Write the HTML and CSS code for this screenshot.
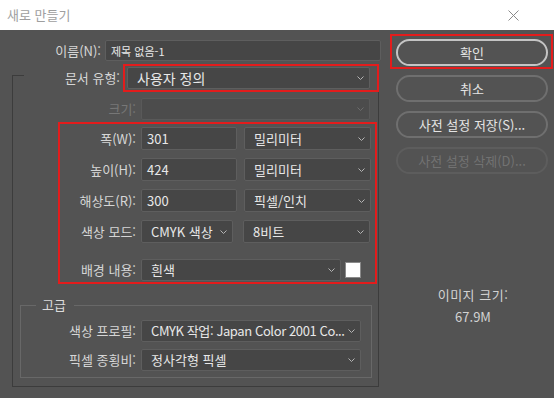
FILE: index.html
```html
<!DOCTYPE html>
<html lang="ko">
<head>
<meta charset="utf-8">
<title>새로 만들기</title>
<link rel="stylesheet" href="styles.css">
</head>
<body>
<div class="titlebar">
  <span class="title">새로 만들기</span>
  <svg class="close" viewBox="0 0 11 11"><path d="M0.5 0.5L10.5 10.5M10.5 0.5L0.5 10.5" stroke="#8a8a8a" stroke-width="1" fill="none"/></svg>
</div>
<div class="main">
  <div class="left">
    <div class="row name-row">
      <span class="lbl w-name">이름(N):</span>
      <div class="field input name-input">제목 없음-1</div>
    </div>
    <div class="group-head">
      <div class="corner"></div>
      <span class="lbl w-type">문서 유형:</span>
      <div class="redbox type-box">
        <div class="field select type-select"><span class="val big">사용자 정의</span><svg class="chev" viewBox="0 0 7 4"><path d="M0.5 0.5L3.5 3.5L6.5 0.5" stroke="#b4b4b4" fill="none"/></svg></div>
      </div>
    </div>
    <div class="group">
      <div class="row size-row">
        <span class="lbl w-outer dim">크기:</span>
        <div class="field select disabled size-select"><span class="val"></span><svg class="chev" viewBox="0 0 7 4"><path d="M0.5 0.5L3.5 3.5L6.5 0.5" stroke="#6c6c6c" fill="none"/></svg></div>
      </div>
      <div class="redbox dims">
        <div class="row drow">
          <span class="lbl w-dim">폭(W):</span>
          <div class="field input num">301</div>
          <div class="field select unit"><span class="val">밀리미터</span><svg class="chev" viewBox="0 0 7 4"><path d="M0.5 0.5L3.5 3.5L6.5 0.5" stroke="#b4b4b4" fill="none"/></svg></div>
        </div>
        <div class="row drow">
          <span class="lbl w-dim">높이(H):</span>
          <div class="field input num">424</div>
          <div class="field select unit"><span class="val">밀리미터</span><svg class="chev" viewBox="0 0 7 4"><path d="M0.5 0.5L3.5 3.5L6.5 0.5" stroke="#b4b4b4" fill="none"/></svg></div>
        </div>
        <div class="row drow">
          <span class="lbl w-dim">해상도(R):</span>
          <div class="field input num">300</div>
          <div class="field select unit"><span class="val">픽셀/인치</span><svg class="chev" viewBox="0 0 7 4"><path d="M0.5 0.5L3.5 3.5L6.5 0.5" stroke="#b4b4b4" fill="none"/></svg></div>
        </div>
        <div class="row drow">
          <span class="lbl w-dim">색상 모드:</span>
          <div class="field select mode"><span class="val">CMYK 색상</span><svg class="chev" viewBox="0 0 7 4"><path d="M0.5 0.5L3.5 3.5L6.5 0.5" stroke="#b4b4b4" fill="none"/></svg></div>
          <div class="field select unit bits"><span class="val">8비트</span><svg class="chev" viewBox="0 0 7 4"><path d="M0.5 0.5L3.5 3.5L6.5 0.5" stroke="#b4b4b4" fill="none"/></svg></div>
        </div>
        <div class="row drow bg-row">
          <span class="lbl w-dim">배경 내용:</span>
          <div class="field select bgsel"><span class="val">흰색</span><svg class="chev" viewBox="0 0 7 4"><path d="M0.5 0.5L3.5 3.5L6.5 0.5" stroke="#b4b4b4" fill="none"/></svg></div>
          <div class="swatch"></div>
        </div>
      </div>
      <div class="adv">
        <div class="adv-head">
          <div class="adv-l"></div>
          <span class="adv-title">고급</span>
          <div class="adv-r"></div>
        </div>
        <div class="adv-body">
          <div class="row">
            <span class="lbl w-adv">색상 프로필:</span>
            <div class="field select advsel"><span class="val tight">CMYK 작업: Japan Color 2001 Co...</span><svg class="chev" viewBox="0 0 7 4"><path d="M0.5 0.5L3.5 3.5L6.5 0.5" stroke="#b4b4b4" fill="none"/></svg></div>
          </div>
          <div class="row">
            <span class="lbl w-adv">픽셀 종횡비:</span>
            <div class="field select advsel"><span class="val">정사각형 픽셀</span><svg class="chev" viewBox="0 0 7 4"><path d="M0.5 0.5L3.5 3.5L6.5 0.5" stroke="#b4b4b4" fill="none"/></svg></div>
          </div>
        </div>
      </div>
    </div>
  </div>
  <div class="right">
    <div class="redbox ok-box">
      <button class="btn primary">확인</button>
    </div>
    <button class="btn side">취소</button>
    <button class="btn side">사전 설정 저장(S)...</button>
    <button class="btn side disabled">사전 설정 삭제(D)...</button>
    <div class="imgsize">
      <div class="imgsize-lbl">이미지 크기:</div>
      <div class="imgsize-val">67.9M</div>
    </div>
  </div>
</div>
</body>
</html>
```

FILE: styles.css
```css
* { box-sizing: border-box; margin: 0; padding: 0; }
html, body { width: 554px; height: 398px; overflow: hidden; }
body {
  margin: 0;
  background: #535353;
  font-family: "Noto Sans CJK KR", "Noto Sans", sans-serif;
  font-size: 13px;
  color: #d6d6d6;
}
.titlebar {
  height: 30px;
  background: #ffffff;
  display: flex;
  align-items: center;
  justify-content: space-between;
  padding: 0 35px 0 7px;
}
.title { color: #9e9e9e; font-size: 13px; line-height: 18px; }
.close { width: 11px; height: 11px; display: block; }

.main { display: flex; height: 368px; }
.left { width: 390px; padding-top: 10px; flex: none; }
.right { width: 164px; padding-top: 4px; display: flex; flex-direction: column; flex: none; }

.row { display: flex; align-items: center; gap: 5px; }
.lbl { text-align: right; line-height: 18px; white-space: nowrap; flex: none; color: #d6d6d6; }
.lbl.dim { color: #777777; }

.field {
  height: 22px;
  background: #464646;
  border: 1px solid #5e5e5e;
  border-radius: 2px;
  display: flex;
  align-items: center;
  color: #e8e8e8;
  line-height: 18px;
  white-space: nowrap;
  flex: none;
}
.input { padding-left: 5px; }
.select { padding: 0 5px 0 9px; justify-content: space-between; }
.val { white-space: nowrap; line-height: 18px; }
.val.big { font-size: 14px; }
.val.tight { letter-spacing: -0.4px; }
.chev { width: 7px; height: 4px; flex: none; display: block; }
.field.disabled { background: #4c4c4c; border-color: #595959; }

.redbox { border: 2px solid #e31c1c; }

/* name row */
.name-row { gap: 4px; }
.w-name { width: 101px; }
.name-input { width: 276px; height: 21px; font-size: 11px; }

/* document type header */
.group-head { display: flex; align-items: flex-start; margin-top: 3px; margin-left: 12px; width: 367px; }
.corner {
  width: 12px;
  align-self: stretch;
  margin-top: 11px;
  border-top: 1px solid #3c3c3c;
  border-left: 1px solid #3c3c3c;
  flex: none;
}
.w-type { width: 96px; margin-top: 5px; }
.type-box { margin-left: 3px; width: 256px; padding: 1px 7px 1px 2px; }
.type-select { width: 243px; }

/* outer group */
.group {
  margin-left: 12px;
  width: 367px;
  border: 1px solid #3c3c3c;
  border-top: none;
  padding-top: 6px;
  padding-bottom: 8px;
}
.w-outer { width: 123px; }
.size-select { width: 229px; }

/* dimensions box */
.dims {
  margin-top: 2px;
  margin-left: 45px;
  width: 319px;
  padding: 3px 4px 1px 0;
  display: flex;
  flex-direction: column;
  gap: 8px;
}
.w-dim { width: 76px; }
.drow .field { height: 23px; }
.num { width: 96px; }
.unit { width: 127px; margin-left: 2px; }
.mode { width: 92px; }
.bits { margin-left: 5px; }
.bg-row { margin-top: 8px; gap: 5px; }
.bg-row .field { height: 22px; }
.bgsel { width: 200px; }
.swatch { width: 16px; height: 16px; background: #ffffff; border: 1px solid #8a8a8a; flex: none; margin-left: -1px; }

/* advanced */
.adv { margin-top: 13px; margin-left: 7px; width: 352px; }
.adv-head { display: flex; height: 16px; }
.adv-l {
  width: 16px;
  height: 8px;
  align-self: flex-end;
  border-top: 1px solid #686868;
  border-left: 1px solid #686868;
  flex: none;
}
.adv-title { padding: 0 8px 0 6px; line-height: 16px; color: #dcdcdc; }
.adv-r {
  flex: 1;
  height: 8px;
  align-self: flex-end;
  border-top: 1px solid #686868;
  border-right: 1px solid #686868;
}
.adv-body {
  border: 1px solid #686868;
  border-top: none;
  padding: 7px 0 6px 0;
  display: flex;
  flex-direction: column;
  gap: 7px;
}
.w-adv { width: 115px; }
.advsel { width: 220px; }

/* buttons */
.ok-box { width: 163px; height: 35px; padding: 3px 3px 1px 4px; }
.btn {
  display: flex;
  align-items: center;
  justify-content: center;
  width: 152px;
  height: 27px;
  border-radius: 14px;
  background: transparent;
  border: 2px solid #6f6f6f;
  color: #e4e4e4;
  font-family: "Noto Sans CJK KR", "Noto Sans", sans-serif;
  font-size: 13px;
  line-height: 18px;
}
.btn.primary { border-color: #c4c4c4; }
.btn.side { margin-left: 6px; margin-top: 9px; }
.ok-box + .btn.side { margin-top: 6px; }
.btn.disabled { border-color: #5d5d5d; color: #727272; }

.imgsize { margin-top: 112px; text-align: center; padding-left: 2px; }
.imgsize-lbl { line-height: 18px; color: #d2d2d2; letter-spacing: 0.5px; }
.imgsize-val { margin-top: 4px; line-height: 18px; color: #d2d2d2; }
```
